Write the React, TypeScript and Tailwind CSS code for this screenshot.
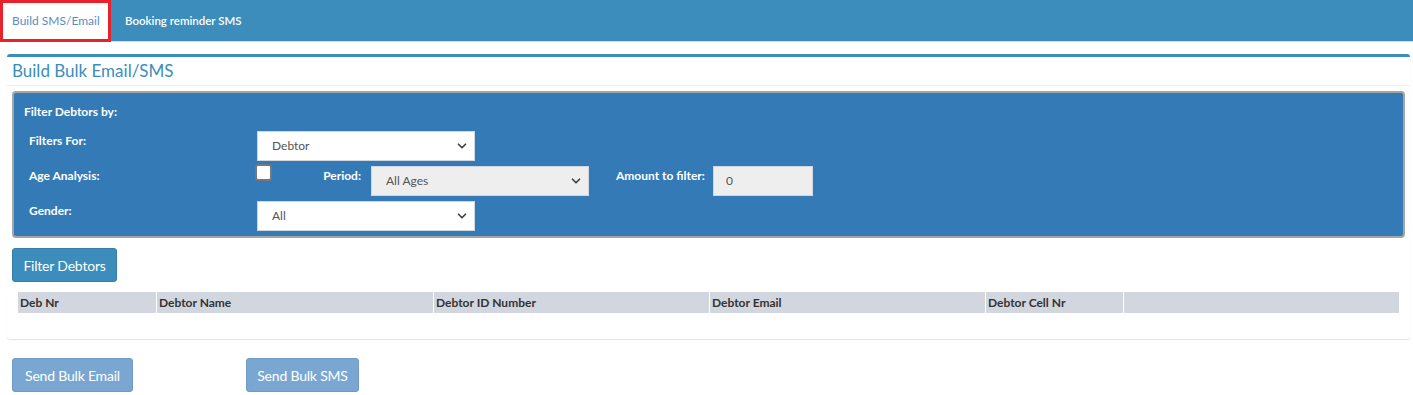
import { ChevronDown } from 'lucide-react';

const font = { fontFamily: 'Lato, "Open Sans", sans-serif' };

function Select({ value, muted }: { value: string; muted?: boolean }) {
  return (
    <div
      className={`flex items-center justify-between w-[218px] h-[30px] border border-[#d2d6de] pl-[14px] pr-[5px] text-[12px] font-normal text-[#555] ${
        muted ? 'bg-[#eeeeee]' : 'bg-white'
      }`}
    >
      <span>{value}</span>
      <ChevronDown size={14} strokeWidth={3} className="text-[#444]" />
    </div>
  );
}

const columns = [
  { label: 'Deb Nr', w: 'w-[138px]' },
  { label: 'Debtor Name', w: 'w-[277px]' },
  { label: 'Debtor ID Number', w: 'w-[276px]' },
  { label: 'Debtor Email', w: 'w-[276px]' },
  { label: 'Debtor Cell Nr', w: 'w-[138px]' },
  { label: '', w: 'flex-1' },
];

export default function App() {
  return (
    <div className="w-[1413px] h-[395px] bg-white overflow-hidden" style={font}>
      <div className="flex h-[42px] bg-[#3c8dbc] border-b border-[#d9dde3]">
        <div className="flex items-center w-[111px] h-[42px] bg-white border-[3px] border-[#e8212a] pl-[9px] text-[12px] text-[#5b8cbf]">
          Build SMS/Email
        </div>
        <div className="flex items-center pl-[14px] text-[11.5px] font-semibold text-white">
          Booking reminder SMS
        </div>
      </div>

      <div className="mx-[7px] mt-[12px] w-[1403px] bg-white border-t-[3px] border-[#3c8dbc] rounded-[3px] shadow-[0_1px_1px_rgba(0,0,0,0.12)]">
        <div className="h-[29px] flex items-center pl-[5px] border-b border-[#f0f0f0] text-[17px] text-[#3c8dbc]">
          Build Bulk Email/SMS
        </div>
        <div className="pt-[5px] px-[5px] pb-[26px]">
          <div className="w-[1393px] bg-[#337ab7] border-2 border-[#a5a5a5] rounded-[4px] pl-[10px] pt-[11px] pb-[5px] text-white text-[12px] font-bold">
            <div className="h-[16px] leading-[16px]">Filter Debtors by:</div>
            <div className="flex flex-col gap-[5px] mt-[11px] pl-[5px]">
              <div className="flex h-[30px]">
                <div className="w-[228px] pt-[1px]">Filters For:</div>
                <Select value="Debtor" />
              </div>
              <div className="flex h-[30px]">
                <div className="w-[226px] pt-[1px]">Age Analysis:</div>
                <div className="w-[17px] h-[17px] -mt-[2px] bg-white border-2 border-[#777] rounded-[3px]" />
                <div className="w-[99px] text-right pr-[10px] pt-[1px]">Period:</div>
                <Select value="All Ages" muted />
                <div className="w-[124px] pl-[27px] pt-[1px]">Amount to filter:</div>
                <div className="flex items-center w-[100px] h-[30px] bg-[#eeeeee] border border-[#d2d6de] pl-[12px] text-[12px] font-normal text-[#555]">
                  0
                </div>
              </div>
              <div className="flex h-[30px]">
                <div className="w-[228px] pt-[1px]">Gender:</div>
                <Select value="All" />
              </div>
            </div>
          </div>

          <button className="mt-[10px] h-[34px] w-[105px] bg-[#3c8dbc] border border-[#367fa9] rounded-[3px] text-[14px] tracking-[-0.2px] text-white">
            Filter Debtors
          </button>

          <div className="flex mt-[10px] ml-[6px] w-[1381px] h-[21px] bg-[#d2d6de] text-[12px] font-bold text-[#333]">
            {columns.map((c, i) => (
              <div
                key={i}
                className={`${c.w} flex items-center pl-[2px] ${i > 0 ? 'border-l border-white' : ''}`}
              >
                {c.label}
              </div>
            ))}
          </div>
        </div>
      </div>

      <div className="flex gap-[113px] mt-[19px] ml-[12px]">
        <button className="h-[34px] w-[121px] bg-[#7aa7d1] border border-[#6f9cc6] rounded-[3px] text-[14px] tracking-[-0.2px] text-white">
          Send Bulk Email
        </button>
        <button className="h-[34px] w-[113px] bg-[#7aa7d1] border border-[#6f9cc6] rounded-[3px] text-[14px] tracking-[-0.2px] text-white">
          Send Bulk SMS
        </button>
      </div>
    </div>
  );
}
